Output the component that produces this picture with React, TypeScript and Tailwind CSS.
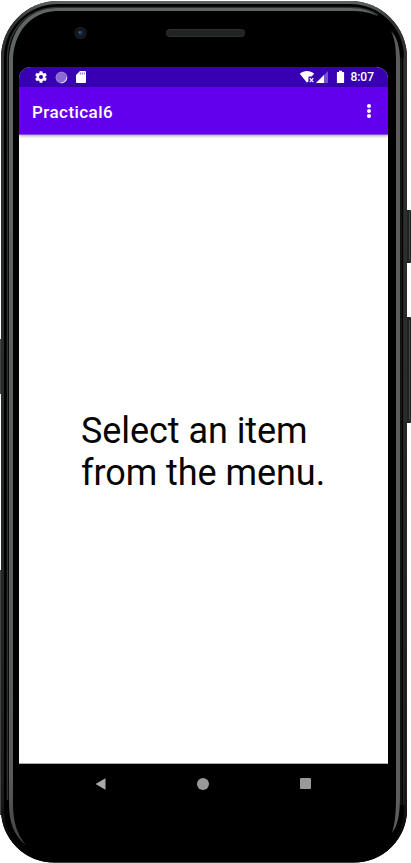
import React from 'react';

function DeviceFrame() {
  return (
    <svg className="absolute inset-0" width="411" height="863" viewBox="0 0 411 863" fill="none" aria-hidden="true">
      <defs>
        <linearGradient id="rim" x1="0" y1="0" x2="0" y2="863" gradientUnits="userSpaceOnUse">
          <stop offset="0" stopColor="#626665" />
          <stop offset="0.025" stopColor="#303332" />
          <stop offset="0.7" stopColor="#242626" />
          <stop offset="0.92" stopColor="#1b1b1c" />
          <stop offset="0.97" stopColor="#060606" />
          <stop offset="1" stopColor="#000" />
        </linearGradient>
        <linearGradient id="sheen" x1="0" y1="0" x2="0" y2="863" gradientUnits="userSpaceOnUse">
          <stop offset="0" stopColor="#626565" />
          <stop offset="0.9" stopColor="#595b5d" />
          <stop offset="0.98" stopColor="#414244" />
        </linearGradient>
      </defs>
      <path d="M0 339h2v55H0zM0 570h2v245H0z" fill="#424443" />
      <path d="M406 210h4q1 0 1 1v51q0 1-1 1h-4zM406 317h4q1 0 1 1v104q0 1-1 1h-4z" fill="#202121" />
      <path d="M409.5 211v50M409.5 320v101" stroke="#444545" />
      <path d="M58 1H350A57 57 0 0 1 407 58V809.5A53 53 0 0 1 354 862.5H54A53 53 0 0 1 1 809.5V58A57 57 0 0 1 58 1Z" fill="#000" />
      <path d="M58 2.5H350A55.5 55.5 0 0 1 405.5 58V809.5A51.5 51.5 0 0 1 354 861H54A51.5 51.5 0 0 1 2.5 809.5V58A55.5 55.5 0 0 1 58 2.5Z" stroke="url(#rim)" strokeWidth="3" />
      <path d="M7.5 800V58C7.5 29 29 7.5 58 7.5H350C362 7.5 371 10 378 15" stroke="#303332" strokeWidth="1.5" />
      <path d="M9 62C9 30 28 9 56 8H350C362 8 372 11 379 17C371 12 362 11 350 11H56C31 12 13 32 13 62V804C13 821 17 835 26 845C14 836 9 822 9 804Z" fill="url(#sheen)" />
      <path d="M391 31C397 37 400 47 400 61V796C400 814 398 825 392 833C395 823 396 813 396 796V61C396 48 395 39 391 31Z" fill="#5b5d5f" />
      <path d="M401 58V805M403.5 58V805" stroke="#252626" />
      <rect x="166.5" y="29.5" width="78" height="7" rx="3" fill="#222323" stroke="#303131" />
      <circle cx="80.5" cy="33" r="6.3" fill="#171818" />
      <circle cx="80.5" cy="33" r="4" fill="#101622" />
      <circle cx="80.5" cy="33" r="2.4" fill="#202d4b" />
      <circle cx="79.7" cy="32.2" r="1" fill="#426292" />
    </svg>
  );
}

function Gear() {
  return (
    <svg width="14" height="14" viewBox="0 0 24 24" fill="white" aria-hidden="true">
      <path d="M19.43 12.98c.04-.32.07-.64.07-.98s-.03-.66-.07-.98l2.11-1.65c.19-.15.24-.42.12-.64l-2-3.46c-.12-.22-.39-.3-.61-.22l-2.49 1c-.52-.4-1.08-.73-1.69-.98l-.38-2.65A.49.49 0 0 0 14 2h-4c-.25 0-.46.18-.49.42l-.38 2.65c-.61.25-1.17.59-1.69.98l-2.49-1c-.23-.09-.49 0-.61.22l-2 3.46c-.13.22-.07.49.12.64l2.11 1.65c-.04.32-.07.65-.07.98s.03.66.07.98l-2.11 1.65c-.19.15-.24.42-.12.64l2 3.46c.12.22.39.3.61.22l2.49-1c.52.4 1.08.73 1.69.98l.38 2.65c.03.24.24.42.49.42h4c.25 0 .46-.18.49-.42l.38-2.65c.61-.25 1.17-.59 1.69-.98l2.49 1c.23.09.49 0 .61-.22l2-3.46c.12-.22.07-.49-.12-.64l-2.11-1.65zM12 15.5a3.5 3.5 0 1 1 0-7 3.5 3.5 0 0 1 0 7z" />
    </svg>
  );
}

function StatusBar() {
  return (
    <div className="flex h-5 shrink-0 items-center bg-[#3700b3] pl-[15px] pr-[14px]">
      <Gear />
      <svg className="ml-[7px]" width="13" height="13" viewBox="0 0 13 13" fill="none" aria-hidden="true">
        <circle cx="6.5" cy="6.5" r="5.8" fill="#8b69d3" />
        <circle cx="6.5" cy="6.5" r="5.4" stroke="#a58bdd" strokeWidth=".7" />
        <path d="M12 5.5A5.6 5.6 0 0 1 5.2 12C9 11.5 11 9 12 5.5Z" fill="#eee8fa" />
      </svg>
      <svg className="ml-[7px]" width="12" height="14" viewBox="0 0 12 14" aria-hidden="true">
        <path d="M5 1h5q1 0 1 1v10q0 1-1 1H2q-1 0-1-1V5z" fill="white" />
        <path d="M5.3 2.5v2M7.3 2.5v2M9.3 2.5v2" stroke="#8061c8" strokeWidth="1" />
      </svg>
      <svg className="ml-auto" width="52" height="14" viewBox="0 0 52 14" aria-hidden="true">
        <path d="M.8 3.8C5 .2 11 .2 15.2 3.8L12.5 6.5H9.5V11L8 12.7Z" fill="white" />
        <path d="m10.8 8.2 3.5 4m0-4-3.5 4" stroke="white" strokeWidth="1.2" />
        <path d="M29 1v12H17z" fill="#7651cc" />
        <path d="M25 5v8h-8z" fill="white" />
        <path d="M40 .7h3v1.3h1.5q.6 0 .6.6v9.8q0 .6-.6.6h-6q-.6 0-.6-.6V2.6q0-.6.6-.6H40z" fill="white" />
      </svg>
      <time className="ml-[-1px] text-[12px] font-medium leading-5 text-white">8:07</time>
    </div>
  );
}

export default function App() {
  return (
    <main className="relative flex h-[863px] w-[411px] flex-col overflow-hidden bg-white pb-[58px] pl-[19px] pr-[23px] pt-[67px] font-['Roboto',sans-serif]">
      <DeviceFrame />
      <section className="relative flex min-h-0 flex-1 flex-col overflow-hidden rounded-t-[12px] bg-white">
        <StatusBar />
        <header className="relative flex h-12 shrink-0 items-center justify-between border-b border-[#8650df] bg-[#6200ee] pl-[13px] pr-[17px] shadow-[0_1px_3px_rgba(0,0,0,0.35)]">
          <h1 className="pt-[2px] text-[17px] font-medium leading-5 tracking-[0.45px] text-white">Practical6</h1>
          <button className="flex flex-col gap-px pt-px" aria-label="More options">
            <span className="size-1 rounded-full bg-white" />
            <span className="size-1 rounded-full bg-white" />
            <span className="size-1 rounded-full bg-white" />
          </button>
        </header>
        <div className="flex flex-1 pl-[62px] pt-[275px]">
          <p className="whitespace-nowrap text-[36px] leading-[42px] tracking-[-0.06px] text-[#050505]">Select an item<br />from the menu.</p>
        </div>
        <nav className="flex h-[42px] shrink-0 items-center justify-between border-t border-[#a9adad] bg-black pb-[2px] pl-[76px] pr-[77px]">
          <svg width="12" height="14" viewBox="0 0 12 14" aria-label="Back"><path d="M.5 7 10.5 1.3V12.7Z" fill="#aaa" /></svg>
          <span className="mr-px size-3 rounded-full bg-[#999]" />
          <span className="size-[11px] rounded-[1px] bg-[#999]" />
        </nav>
      </section>
    </main>
  );
}
